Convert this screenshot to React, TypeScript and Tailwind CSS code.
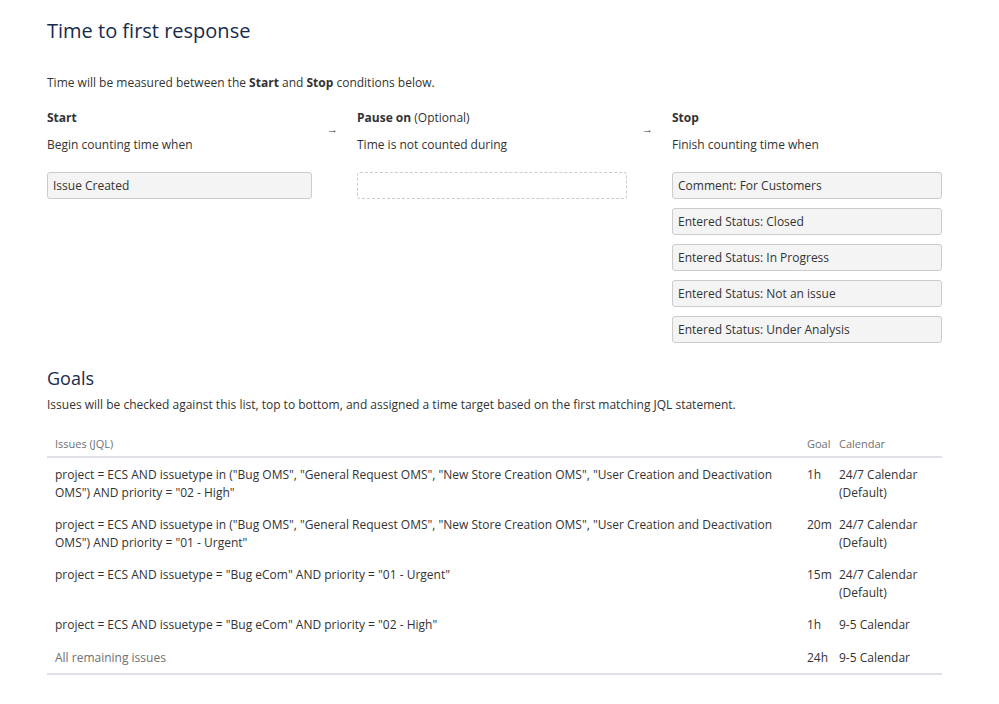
const stopConditions = [
  "Comment: For Customers",
  "Entered Status: Closed",
  "Entered Status: In Progress",
  "Entered Status: Not an issue",
  "Entered Status: Under Analysis",
];

const goals = [
  {
    jql: 'project = ECS AND issuetype in ("Bug OMS", "General Request OMS", "New Store Creation OMS", "User Creation and Deactivation OMS") AND priority = "02 - High"',
    goal: "1h",
    calendar: "24/7 Calendar (Default)",
  },
  {
    jql: 'project = ECS AND issuetype in ("Bug OMS", "General Request OMS", "New Store Creation OMS", "User Creation and Deactivation OMS") AND priority = "01 - Urgent"',
    goal: "20m",
    calendar: "24/7 Calendar (Default)",
  },
  {
    jql: 'project = ECS AND issuetype = "Bug eCom" AND priority = "01 - Urgent"',
    goal: "15m",
    calendar: "24/7 Calendar (Default)",
  },
  {
    jql: 'project = ECS AND issuetype = "Bug eCom" AND priority = "02 - High"',
    goal: "1h",
    calendar: "9-5 Calendar",
  },
];

function Condition({ label }: { label: string }) {
  return (
    <div className="h-[27px] rounded-[3px] border border-[#cccccc] bg-[#f4f4f4] px-[5px] leading-[25px]">
      {label}
    </div>
  );
}

function Arrow() {
  return <div className="pt-[11px] pl-[15px] text-[11px] leading-[18px]">→</div>;
}

export default function App() {
  return (
    <div
      className="min-h-[704px] bg-white pl-[47px] pt-[19px] text-[12px] leading-[18px] text-[#333333]"
      style={{ fontFamily: '"Open Sans", "Noto Sans", sans-serif' }}
    >
      <div className="w-[895px]">
        <h1 className="text-[20px] leading-[24px] text-[#172b4d]">Time to first response</h1>

        <p className="mt-[31px]">
          Time will be measured between the <b>Start</b> and <b>Stop</b> conditions below.
        </p>

        <div className="mt-[17px] grid grid-cols-[265px_45px_270px_45px_270px]">
          <div>
            <div className="font-bold">Start</div>
            <div className="mt-[9px]">Begin counting time when</div>
            <div className="mt-[18px]">
              <Condition label="Issue Created" />
            </div>
          </div>
          <Arrow />
          <div>
            <div>
              <b>Pause on</b> (Optional)
            </div>
            <div className="mt-[9px]">Time is not counted during</div>
            <div className="mt-[18px] h-[27px] rounded-[3px] border border-dashed border-[#cccccc]" />
          </div>
          <Arrow />
          <div>
            <div className="font-bold">Stop</div>
            <div className="mt-[9px]">Finish counting time when</div>
            <div className="mt-[18px] flex flex-col gap-[9px]">
              {stopConditions.map((c) => (
                <Condition key={c} label={c} />
              ))}
            </div>
          </div>
        </div>

        <h2 className="mt-[24px] text-[18px] leading-[22px] text-[#172b4d]">Goals</h2>
        <p className="mt-[7px]">
          Issues will be checked against this list, top to bottom, and assigned a time target based on the
          first matching JQL statement.
        </p>

        <table className="mt-[21px] w-full border-collapse border-b-2 border-[#dfe1e6]">
          <thead>
            <tr className="border-b-2 border-[#dfe1e6] text-left text-[11px] text-[#707070]">
              <th className="px-[8px] pb-[3px] font-normal">Issues (JQL)</th>
              <th className="w-[32px] pb-[3px] font-normal">Goal</th>
              <th className="w-[103px] pb-[3px] font-normal">Calendar</th>
            </tr>
          </thead>
          <tbody>
            {goals.map((g, i) => (
              <tr key={i} className="align-top">
                <td className="pt-[8px] pb-[6px] pl-[8px] pr-[24px]">{g.jql}</td>
                <td className="pt-[8px] pb-[6px]">{g.goal}</td>
                <td className="pt-[8px] pb-[6px]">{g.calendar}</td>
              </tr>
            ))}
            <tr className="align-top">
              <td className="pt-[9px] pb-[6px] pl-[8px] text-[#707070]">All remaining issues</td>
              <td className="pt-[9px] pb-[6px]">24h</td>
              <td className="pt-[9px] pb-[6px]">9-5 Calendar</td>
            </tr>
          </tbody>
        </table>
      </div>
    </div>
  );
}
